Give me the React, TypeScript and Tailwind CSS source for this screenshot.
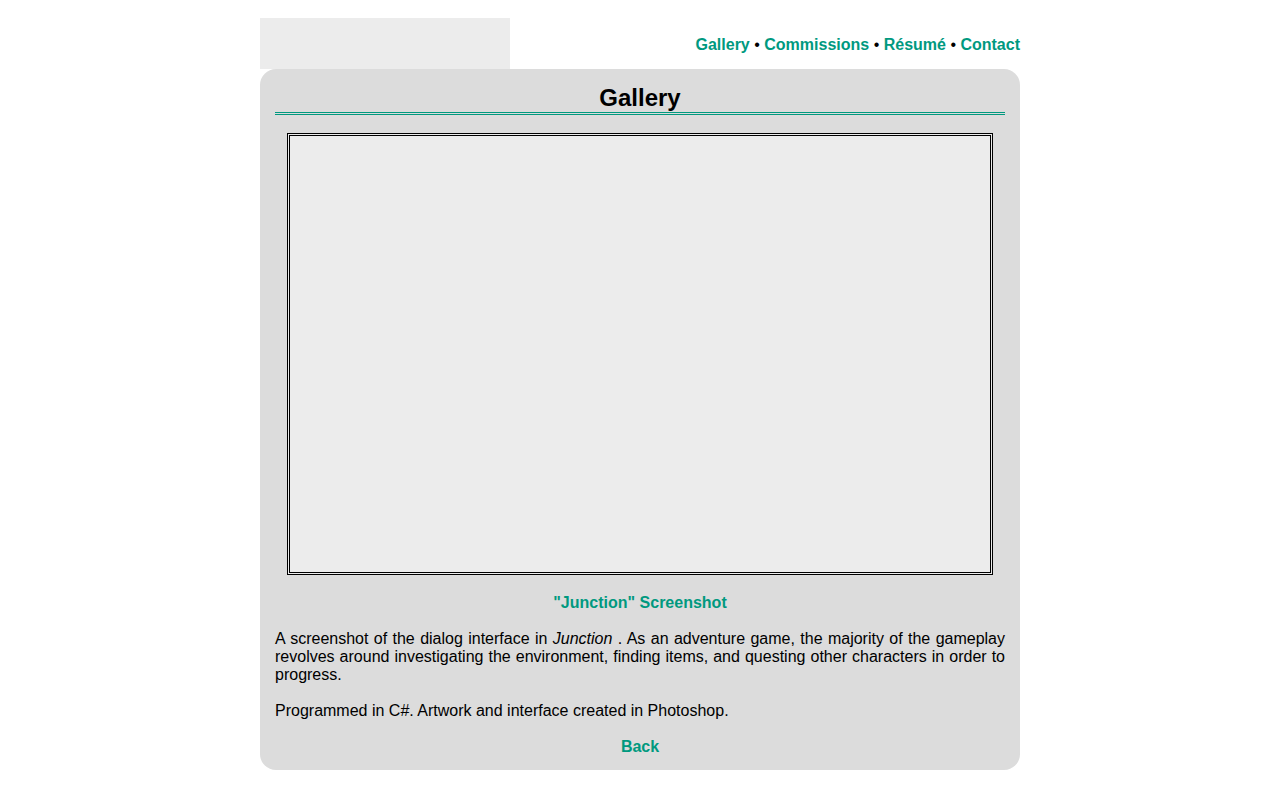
export default function App() {
  const link = "text-[#00997f] font-bold";
  return (
    <div className="min-h-screen bg-white font-['Liberation_Sans',Arial,sans-serif] text-black text-base">
      <div className="w-[760px] mx-auto pt-[18px]">
        {/* Header: logo slot + nav */}
        <div className="flex items-end justify-between">
          <div className="w-[250px] h-[51px] bg-[#ececec]" />
          <nav className="pb-[15px] leading-[18px]">
            <a className={link}>Gallery</a> • <a className={link}>Commissions</a> •{" "}
            <a className={link}>Résumé</a> • <a className={link}>Contact</a>
          </nav>
        </div>

        {/* Content card */}
        <div className="bg-[#dcdcdc] rounded-2xl px-[15px] pt-[15px] pb-[14px]">
          <h1 className="text-2xl font-bold text-center leading-[28px] border-b-[3px] border-double border-[#00997f]">
            Gallery
          </h1>

          <div className="flex justify-center mt-[18px]">
            <div className="w-[706px] h-[442px] border-[3px] border-double border-black bg-[#ececec]" />
          </div>

          <p className={`${link} text-center leading-[18px] mt-[19px]`}>"Junction" Screenshot</p>

          <p className="text-justify leading-[18px] mt-[18px]">
            A screenshot of the dialog interface in <i>Junction</i> . As an adventure game, the majority of the
            gameplay revolves around investigating the environment, finding items, and questing other characters in
            order to progress.
          </p>

          <p className="leading-[18px] mt-[18px]">Programmed in C#. Artwork and interface created in Photoshop.</p>

          <p className="text-center leading-[18px] mt-[18px]">
            <a className={link}>Back</a>
          </p>
        </div>
      </div>
    </div>
  );
}
